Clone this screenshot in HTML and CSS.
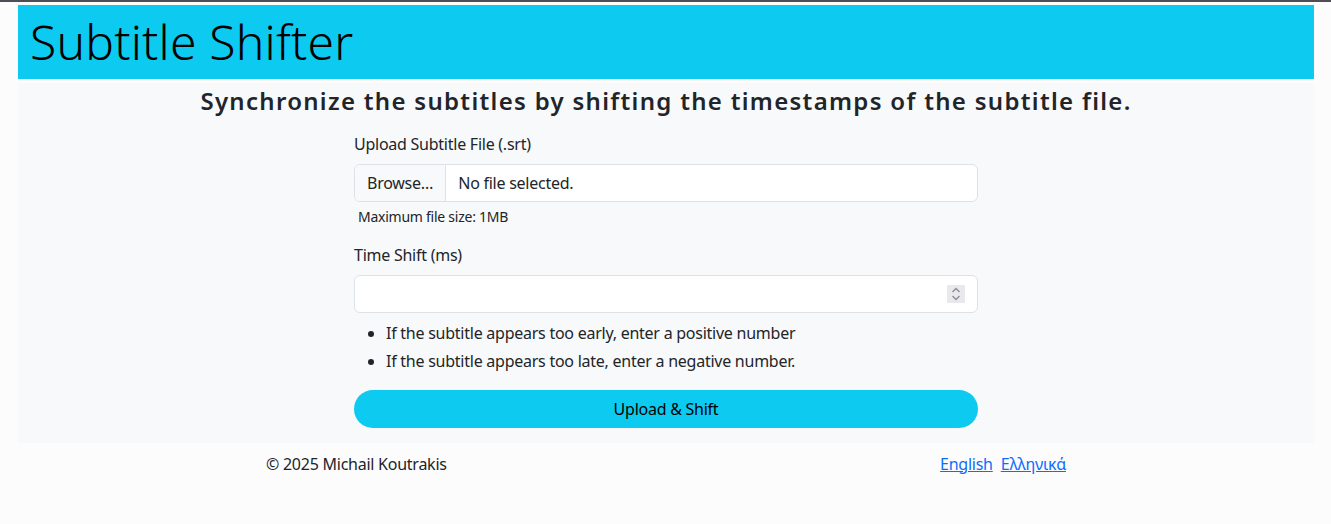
FILE: index.html
```html
<!DOCTYPE html>
<html lang="en">
<head>
<meta charset="utf-8">
<title>Subtitle Shifter</title>
<link rel="stylesheet" href="styles.css">
</head>
<body>
<div class="page">
  <header class="header">
    <h1 class="title">Subtitle Shifter</h1>
  </header>
  <main class="main">
    <h4 class="lead">Synchronize the subtitles by shifting the timestamps of the subtitle file.</h4>
    <form class="form">
      <div class="field">
        <label class="label">Upload Subtitle File (.srt)</label>
        <div class="file-input">
          <span class="file-btn">Browse…</span>
          <span class="file-name">No file selected.</span>
        </div>
        <div class="hint">Maximum file size: 1MB</div>
      </div>
      <div class="field">
        <label class="label">Time Shift (ms)</label>
        <div class="number-input">
          <span class="number-value"></span>
          <span class="spinner">
            <svg width="12" height="16" viewBox="0 0 12 16"><path d="M2.5 6 L6 2.5 L9.5 6 M2.5 10 L6 13.5 L9.5 10" fill="none" stroke="#8a8a94" stroke-width="1.3"/></svg>
          </span>
        </div>
        <ul class="notes">
          <li>If the subtitle appears too early, enter a positive number</li>
          <li>If the subtitle appears too late, enter a negative number.</li>
        </ul>
      </div>
      <button type="button" class="submit">Upload &amp; Shift</button>
    </form>
  </main>
  <footer class="footer">
    <span class="copy">© 2025 Michail Koutrakis</span>
    <span class="langs"><a href="#">English</a><a href="#">Ελληνικά</a></span>
  </footer>
</div>
</body>
</html>
```
FILE: styles.css
```css
html, body {
  margin: 0;
  padding: 0;
}
body {
  background: #fcfcfc;
  border-top: 2px solid #4e4e57;
  font-family: "Noto Sans", "Open Sans", sans-serif;
  color: #212529;
  font-size: 16px;
  line-height: 1.5;
  letter-spacing: -0.25px;
  min-height: 522px;
}
.page {
  width: 1296px;
  margin: 0 auto;
  padding-top: 3px;
  position: relative;
  left: 0.5px;
}
.header {
  background: #0dcaf0;
  height: 74px;
  padding: 0 12px;
  display: flex;
  align-items: center;
}
.title {
  margin: 0;
  font-size: 48px;
  font-weight: 300;
  color: #000;
  line-height: 1;
  letter-spacing: 0.2px;
}
.main {
  margin-top: 4px;
  background: #f8f9fa;
  padding: 4px 0 15px;
  display: flex;
  flex-direction: column;
  align-items: center;
}
.lead {
  margin: 0 0 16px;
  font-size: 24px;
  font-weight: 600;
  line-height: 1.2;
  letter-spacing: 1.3px;
}
.form {
  width: 624px;
  display: flex;
  flex-direction: column;
}
.field {
  margin-bottom: 16px;
}
.field + .field {
  margin-bottom: 15px;
}
.label {
  display: block;
  margin-bottom: 8px;
}
.file-input, .number-input {
  height: 38px;
  box-sizing: border-box;
  border: 1px solid #dee2e6;
  border-radius: 6px;
  background: #fff;
  display: flex;
  align-items: center;
  overflow: hidden;
}
.file-btn {
  align-self: stretch;
  display: flex;
  align-items: center;
  padding: 0 12px;
  background: #f8f9fa;
  border-right: 1px solid #dee2e6;
}
.file-name {
  padding-left: 12px;
}
.hint {
  margin-top: 4px;
  padding-left: 4px;
  font-size: 14px;
}
.number-value {
  flex: 1;
}
.spinner {
  width: 18px;
  height: 18px;
  margin-right: 12px;
  background: #e9e9ed;
  display: flex;
  align-items: center;
  justify-content: center;
}
.notes {
  margin: 6px 0 0;
  padding-left: 32px;
}
.notes li {
  line-height: 28px;
}
.submit {
  height: 38px;
  border: none;
  border-radius: 19px;
  background: #0dcaf0;
  color: #000;
  font-family: inherit;
  font-size: 16px;
  letter-spacing: -0.25px;
  margin-top: 0;
}
.footer {
  width: 800px;
  margin: 9px auto 0;
  display: flex;
  justify-content: space-between;
  line-height: 24px;
}
.langs a {
  color: #0d6efd;
  text-decoration: underline;
  margin-left: 8px;
}
```
